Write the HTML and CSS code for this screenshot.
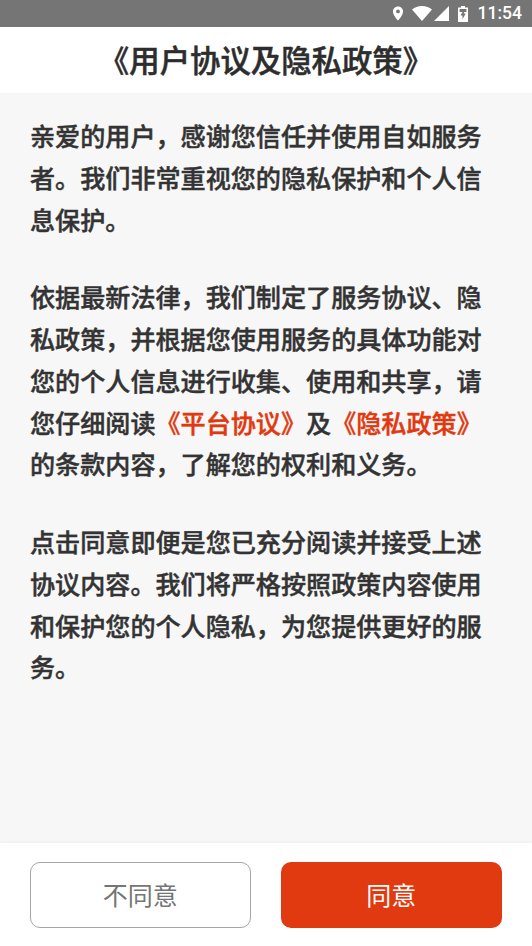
FILE: index.html
```html
<!DOCTYPE html>
<html lang="zh-CN">
<head>
<meta charset="utf-8">
<title>用户协议及隐私政策</title>
<link rel="stylesheet" href="styles.css">
</head>
<body>
<div class="phone">
  <div class="status">
    <svg class="i-pin" viewBox="0 0 12 16"><path fill-rule="evenodd" d="M6 0.5C2.9 0.5 0.6 2.9 0.6 5.8 0.6 9.6 6 15.5 6 15.5s5.4-5.9 5.4-9.7C11.4 2.9 9.1 0.5 6 0.5zM6 7.8a2 2 0 1 1 0-4 2 2 0 0 1 0 4z"/></svg>
    <svg class="i-wifi" viewBox="0 0 20 15"><path d="M10 15L0 3.4C2.7 1.3 6.2 0 10 0s7.3 1.3 10 3.4z"/></svg>
    <svg class="i-cell" viewBox="0 0 15 15"><path d="M15 0v15H0z"/></svg>
    <svg class="i-batt" viewBox="0 0 10 16"><path fill-rule="evenodd" d="M3 0h4v1.5h3V6H8.4V3H1.6v3H0V1.5h3z"/><path fill-rule="evenodd" d="M0 6h4.6L2.5 9.6h2v3.6L7.7 7.4h-2L6.3 6H10v10H0z"/></svg>
    <span class="clock">11:54</span>
  </div>
  <header class="head">《用户协议及隐私政策》</header>
  <main class="body">
    <p>亲爱的用户，感谢您信任并使用自如服务者。我们非常重视您的隐私保护和个人信息保护。</p>
    <p>依据最新法律，我们制定了服务协议、隐私政策，并根据您使用服务的具体功能对您的个人信息进行收集、使用和共享，请您仔细阅读<a class="link">《平台协议》</a>及<a class="link">《隐私政策》</a>的条款内容，了解您的权利和义务。</p>
    <p>点击同意即便是您已充分阅读并接受上述协议内容。我们将严格按照政策内容使用和保护您的个人隐私，为您提供更好的服务。</p>
  </main>
  <footer class="foot">
    <button class="btn ghost">不同意</button>
    <button class="btn solid">同意</button>
  </footer>
</div>
</body>
</html>
```
FILE: styles.css
```css
* { box-sizing: border-box; }
html, body { margin: 0; padding: 0; }
body { font-family: "Noto Sans CJK SC", "Liberation Sans", sans-serif; background: #f7f7f7; }
.phone { width: 532px; height: 946px; display: flex; flex-direction: column; overflow: hidden; }
.status { height: 27px; flex: none; background: #757575; color: #fff; display: flex; align-items: center; justify-content: flex-end; padding-right: 10px; }
.status svg { fill: #fff; display: block; }
.i-pin { width: 12px; height: 15px; margin-right: 8px; }
.i-wifi { width: 20px; height: 15px; margin-right: 2px; }
.i-cell { width: 15px; height: 15px; margin-right: 9px; }
.i-batt { width: 10px; height: 16px; margin-right: 10px; }
.clock { font-family: Roboto, sans-serif; font-size: 17.5px; font-weight: 500; line-height: 27px; }
.head { height: 66px; flex: none; background: #fff; display: flex; align-items: center; justify-content: center; font-size: 30.4px; font-weight: 500; -webkit-text-stroke: 0.5px #2d2d2d; color: #2d2d2d; padding-bottom: 2px; }
.body { flex: 1; padding: 22px 30px 0; font-size: 25.1px; font-weight: 500; -webkit-text-stroke: 0.45px currentColor; line-height: 41.75px; color: #333; }
.body p { margin: 0 0 36px; width: 456px; }
.link { color: #e1390f; }
.foot { height: 103px; flex: none; background: #fff; display: flex; justify-content: space-between; align-items: flex-start; padding: 19px 30px 0 29.5px; box-shadow: 0 -1px 3px rgba(0,0,0,0.04); }
.btn { width: 221.5px; height: 66px; border-radius: 10px; font-family: inherit; font-size: 25px; padding: 0 0 3px; }
.ghost { background: #fff; border: 1.5px solid #a5a5a5; color: #757575; }
.solid { background: #e13a11; border: 0; color: #fff; }
```
